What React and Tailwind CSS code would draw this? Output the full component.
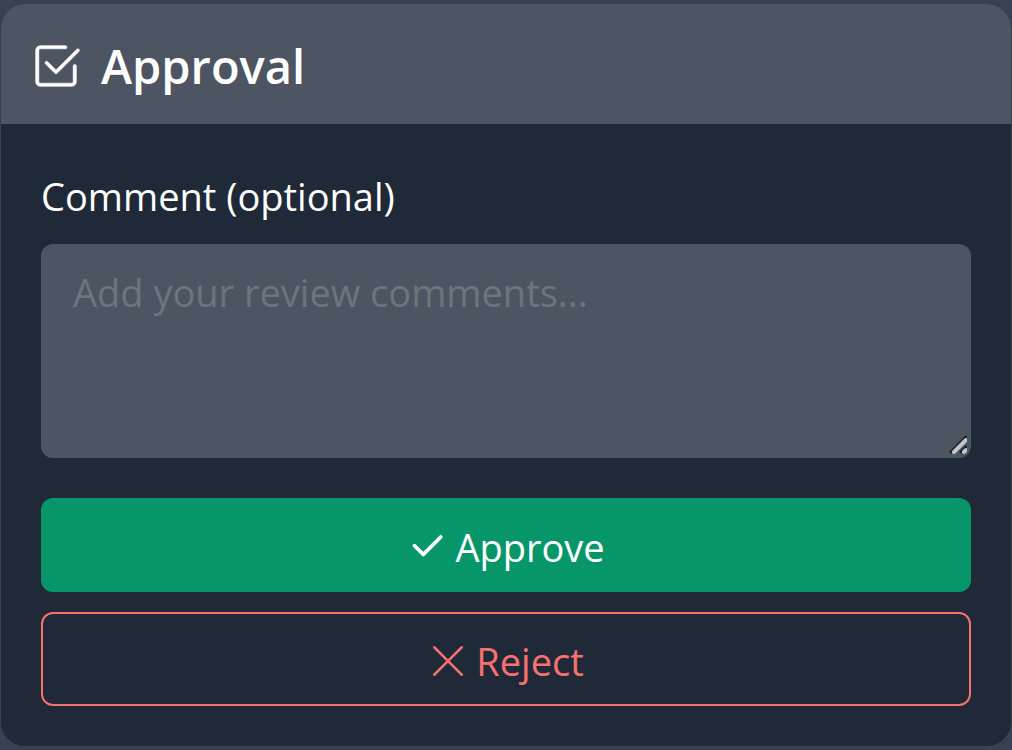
import { BsCheck2, BsCheck2Square, BsXLg } from "react-icons/bs";

function ResizeGrip() {
  return (
    <svg
      className="pointer-events-none absolute right-1 bottom-1 h-5 w-5"
      viewBox="0 0 20 20"
      fill="none"
      strokeLinecap="round"
      aria-hidden="true"
    >
      <path d="M4 18 19 3M14 18l5-5" stroke="#1c212b" strokeWidth="3" />
      <path d="M7 18 19 6M17 18l2-2" stroke="#c4c4c4" strokeWidth="4" />
    </svg>
  );
}

export default function App() {
  return (
    <main className="min-h-screen bg-[#374151] px-px py-1 font-['Open_Sans','Noto_Sans',sans-serif] text-white">
      <section className="overflow-hidden rounded-3xl bg-[#202937]">
        <header className="flex h-30 items-center gap-5 bg-[#4d5563] px-[30px] pt-1">
          <BsCheck2Square className="h-[50px] w-[50px] shrink-0 stroke-[0.2]" />
          <h1 className="text-[47px] leading-14 font-semibold">Approval</h1>
        </header>

        <form className="px-10 pt-11 pb-10" onSubmit={(e) => e.preventDefault()}>
          <label htmlFor="comment" className="block text-[38px] leading-14">
            Comment (optional)
          </label>
          <div className="relative mt-5">
            <textarea
              id="comment"
              placeholder="Add your review comments..."
              className="block h-[214px] w-full resize-none rounded-xl border-2 border-[#4b5563] bg-[#4d5563] px-[30px] py-[18px] text-[38px] leading-14 placeholder:text-[#6c757d]"
            />
            <ResizeGrip />
          </div>

          <div className="mt-10 flex flex-col gap-5 text-[38px] leading-14">
            <button
              type="submit"
              className="flex h-[94px] items-center justify-center gap-2 rounded-xl bg-[#07966a] pt-1"
            >
              <BsCheck2 className="h-10 w-10 stroke-[0.5]" />
              Approve
            </button>
            <button
              type="button"
              className="flex h-[94px] items-center justify-center gap-2 rounded-xl border-2 border-[#f87171] pt-1 text-[#f87171]"
            >
              <BsXLg className="h-10 w-10" />
              Reject
            </button>
          </div>
        </form>
      </section>
    </main>
  );
}
